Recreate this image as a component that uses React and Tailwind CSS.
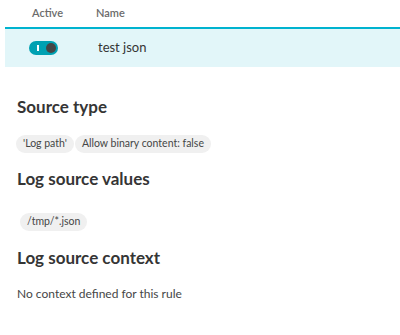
import React from 'react';

const chipClass =
  'inline-flex items-center h-[18px] px-[7px] rounded-full bg-[#f0f0f0] text-[10.5px] text-[#454646]';

function Toggle() {
  return (
    <span className="relative inline-flex items-center w-[29px] h-[14px] rounded-full bg-[#00a1b2]">
      <span className="absolute left-[8px] top-[4px] w-[1.5px] h-[6px] bg-white" />
      <span className="absolute right-[2.5px] top-[2px] w-[10px] h-[10px] rounded-full bg-[#454646]" />
    </span>
  );
}

export default function App() {
  return (
    <div
      className="w-[400px] h-[335px] bg-white overflow-hidden text-[#454646]"
      style={{ fontFamily: 'Lato, "Open Sans", sans-serif' }}
    >
      {/* Table */}
      <div className="pl-[5px]">
        <div className="flex items-center h-[27px] text-[11px] text-[#6b6b6b] font-semibold">
          <span className="w-[91px] pl-[27px]">Active</span>
          <span>Name</span>
        </div>
        <div className="h-[2px] bg-[#00b3cf]" />
        <div className="flex items-center h-[38px] bg-[#e2f6f9]">
          <div className="w-[93px] pl-[24px] flex items-center">
            <Toggle />
          </div>
          <span className="text-[13px] text-[#353535]">test json</span>
        </div>
      </div>

      {/* Details */}
      <div className="px-[16px]">
        <h2 className="mt-[29px] text-[17px] font-bold text-[#353535] leading-[22px] pl-[1px]">Source type</h2>
        <div className="mt-[17px] flex gap-[1px]">
          <span className={chipClass}>'Log path'</span>
          <span className={chipClass}>Allow binary content: false</span>
        </div>

        <h2 className="mt-[15px] text-[17px] font-bold text-[#353535] leading-[22px] pl-[1px]">Log source values</h2>
        <div className="mt-[23px] flex pl-[4px]">
          <span className={chipClass}>/tmp/*.json</span>
        </div>

        <h2 className="mt-[16px] text-[17px] font-bold text-[#353535] leading-[22px] pl-[1px]">Log source context</h2>
        <p className="mt-[16px] text-[12px] pl-[1px]">No context defined for this rule</p>
      </div>
    </div>
  );
}
